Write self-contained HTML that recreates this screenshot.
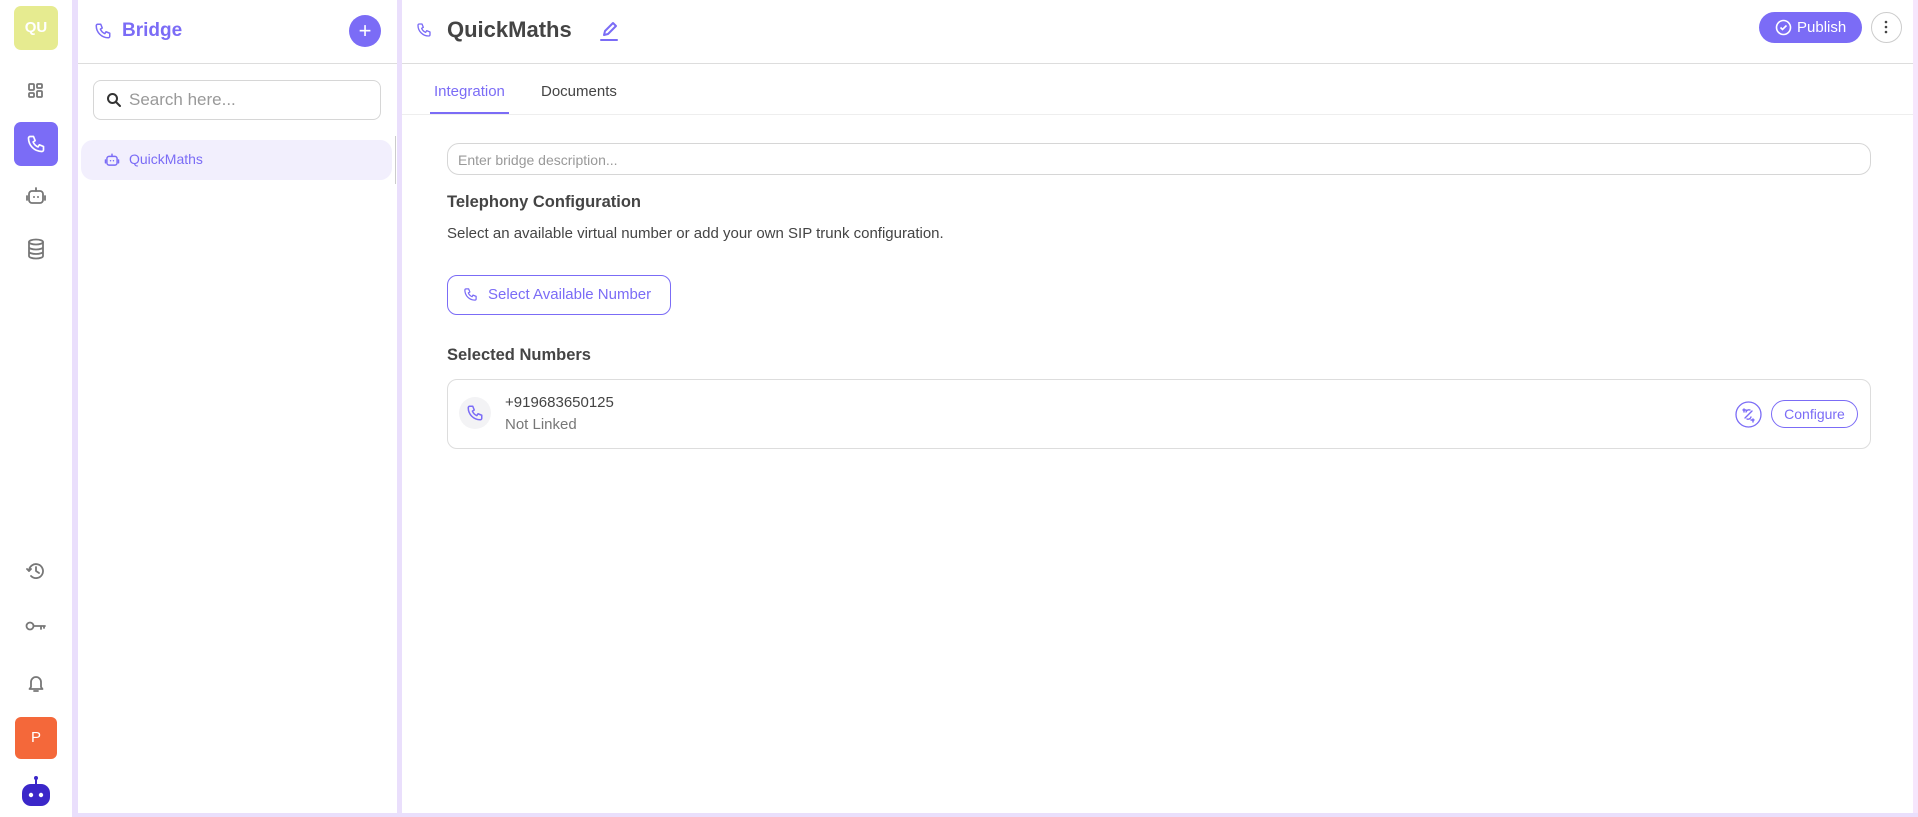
<!DOCTYPE html>
<html><head><meta charset="utf-8"><style>
*{box-sizing:border-box;margin:0;padding:0}
body{width:1918px;height:817px;overflow:hidden;background:#fff;font-family:"Liberation Sans",sans-serif;position:relative;color:#333}
.abs{position:absolute}
.ic{stroke:#7b6cf6;fill:none;stroke-width:2;stroke-linecap:round;stroke-linejoin:round}
.gr{stroke:#777;fill:none;stroke-width:1.8;stroke-linecap:round;stroke-linejoin:round}
</style></head><body>
<!-- rail -->
<div class="abs" style="left:14px;top:6px;width:44px;height:44px;border-radius:7px;background:#e6eb90;color:#fff;font-weight:bold;font-size:15px;text-align:center;line-height:44px">QU</div>
<svg class="abs" style="left:27px;top:82px" width="18" height="18" viewBox="0 0 18 18"><g class="gr" stroke-width="1.5"><rect x="2" y="2" width="5" height="6" rx="1"/><rect x="10" y="2" width="5" height="4" rx="1"/><rect x="2" y="11" width="5" height="4" rx="1"/><rect x="10" y="9" width="5" height="6" rx="1"/></g></svg>
<div class="abs" style="left:14px;top:122px;width:44px;height:44px;border-radius:7px;background:#7b6cf6"></div>
<svg class="abs" style="left:26px;top:134px" width="20" height="20" viewBox="0 0 24 24"><path d="M5 3h4l2 5-2.5 1.5a11 11 0 0 0 6 6L16 13l5 2v4a2 2 0 0 1-2 2A16 16 0 0 1 3 5a2 2 0 0 1 2-2" fill="none" stroke="#fff" stroke-width="2" stroke-linejoin="round"/></svg>
<svg class="abs" style="left:25px;top:185px" width="22" height="22" viewBox="0 0 22 22"><g class="gr"><rect x="4" y="6" width="14" height="12" rx="3"/><path d="M11 6V3M2 11v4M20 11v4"/></g><circle cx="9" cy="12" r="1" fill="#777"/><circle cx="13" cy="12" r="1" fill="#777"/></svg>
<svg class="abs" style="left:26px;top:238px" width="20" height="22" viewBox="0 0 20 22"><g class="gr"><ellipse cx="10" cy="4" rx="7" ry="2.5"/><path d="M3 4v14c0 1.4 3 2.5 7 2.5s7-1.1 7-2.5V4M3 9c0 1.4 3 2.5 7 2.5s7-1.1 7-2.5M3 13.5c0 1.4 3 2.5 7 2.5s7-1.1 7-2.5"/></g></svg>
<svg class="abs" style="left:26px;top:561px" width="20" height="20" viewBox="0 0 20 20"><g class="gr"><path d="M3 10a7 7 0 1 1 2 5"/><path d="M1 8l2 2 2-2M10 6v4l3 2"/></g></svg>
<svg class="abs" style="left:25px;top:619px" width="22" height="14" viewBox="0 0 22 14"><g class="gr" stroke-width="2"><circle cx="5" cy="7" r="3.5"/><path d="M8.5 7H20M16 7v3M19 7v2"/></g></svg>
<svg class="abs" style="left:27px;top:673px" width="18" height="20" viewBox="0 0 18 20"><g class="gr"><path d="M4 14V9a5 5 0 0 1 10 0v5l1.5 2h-13zM7 18h4"/></g></svg>
<div class="abs" style="left:15px;top:717px;width:42px;height:42px;border-radius:6px;background:#f4683a;color:#fff;font-size:15px;text-align:center;line-height:42px">P</div>
<svg class="abs" style="left:20px;top:775px" width="32" height="34" viewBox="0 0 32 34"><circle cx="16" cy="3" r="2" fill="#3b27c9"/><rect x="15" y="3" width="2" height="6" fill="#3b27c9"/><rect x="2" y="9" width="28" height="22" rx="9" fill="#3b27c9"/><circle cx="11" cy="20" r="2.2" fill="#fff"/><circle cx="21" cy="20" r="2.2" fill="#fff"/></svg>
<!-- lavender frames -->
<div class="abs" style="left:72px;top:0;width:6px;height:817px;background:#eadffc"></div>
<div class="abs" style="left:397px;top:0;width:5px;height:817px;background:#eadffc"></div>
<div class="abs" style="left:1913px;top:0;width:5px;height:817px;background:#f6e6fc"></div>
<div class="abs" style="left:72px;top:813px;width:1846px;height:4px;background:#eadffc"></div>
<!-- second panel -->
<svg class="abs" style="left:94px;top:22px" width="18" height="18" viewBox="0 0 24 24"><path class="ic" d="M5 3h4l2 5-2.5 1.5a11 11 0 0 0 6 6L16 13l5 2v4a2 2 0 0 1-2 2A16 16 0 0 1 3 5a2 2 0 0 1 2-2"/></svg>
<div class="abs" style="left:122px;top:20px;font-size:19px;font-weight:bold;color:#7b6cf6">Bridge</div>
<div class="abs" style="left:349px;top:15px;width:32px;height:32px;border-radius:50%;background:#7b6cf6;color:#fff;text-align:center;line-height:31px;font-size:22px">+</div>
<div class="abs" style="left:78px;top:63px;width:319px;height:1px;background:#ddd"></div>
<div class="abs" style="left:93px;top:80px;width:288px;height:40px;border:1px solid #d6d6d6;border-radius:8px"></div>
<svg class="abs" style="left:106px;top:92px" width="16" height="16" viewBox="0 0 16 16"><circle cx="6.5" cy="6.5" r="4.5" fill="none" stroke="#333" stroke-width="2"/><path d="M10 10l4 4" stroke="#333" stroke-width="2" stroke-linecap="round"/></svg>
<div class="abs" style="left:129px;top:90px;font-size:17px;color:#999">Search here...</div>
<div class="abs" style="left:81px;top:140px;width:311px;height:40px;border-radius:12px;background:#f2effd"></div>
<div class="abs" style="left:395px;top:136px;width:1px;height:48px;background:#ccc"></div>
<svg class="abs" style="left:104px;top:152px" width="16" height="16" viewBox="0 0 22 22"><g class="ic"><rect x="4" y="6" width="14" height="12" rx="3"/><path d="M11 6V3M2 11v4M20 11v4"/></g><circle cx="9" cy="12" r="1" fill="#7b6cf6"/><circle cx="13" cy="12" r="1" fill="#7b6cf6"/></svg>
<div class="abs" style="left:129px;top:151px;font-size:14px;color:#7b6cf6">QuickMaths</div>
<!-- main -->
<svg class="abs" style="left:416px;top:22px" width="16" height="16" viewBox="0 0 24 24"><path class="ic" d="M5 3h4l2 5-2.5 1.5a11 11 0 0 0 6 6L16 13l5 2v4a2 2 0 0 1-2 2A16 16 0 0 1 3 5a2 2 0 0 1 2-2"/></svg>
<div class="abs" style="left:447px;top:17px;font-size:22px;font-weight:bold;color:#444">QuickMaths</div>
<svg class="abs" style="left:600px;top:20px" width="18" height="22" viewBox="0 0 18 22"><path class="ic" stroke-width="1.6" d="M4 15l1-4 8-8 3 3-8 8zM1 20h16"/></svg>
<div class="abs" style="left:402px;top:63px;width:1511px;height:1px;background:#ddd"></div>
<div class="abs" style="left:1759px;top:12px;width:103px;height:31px;border-radius:16px;background:#7b6cf6;color:#fff;font-size:15px;line-height:31px;padding-left:38px">Publish</div>
<svg class="abs" style="left:1775px;top:19px" width="17" height="17" viewBox="0 0 17 17"><circle cx="8.5" cy="8.5" r="7" fill="none" stroke="#fff" stroke-width="1.6"/><path d="M5.5 8.5l2 2 4-4" fill="none" stroke="#fff" stroke-width="1.6"/></svg>
<div class="abs" style="left:1871px;top:12px;width:31px;height:31px;border-radius:50%;border:1px solid #ccc"></div>
<svg class="abs" style="left:1884px;top:20px" width="4" height="14"><circle cx="2" cy="2" r="1.3" fill="#444"/><circle cx="2" cy="7" r="1.3" fill="#444"/><circle cx="2" cy="12" r="1.3" fill="#444"/></svg>
<div class="abs" style="left:434px;top:83px;font-size:15px;color:#7b6cf6">Integration</div>
<div class="abs" style="left:541px;top:83px;font-size:15px;color:#444">Documents</div>
<div class="abs" style="left:402px;top:114px;width:1511px;height:1px;background:#eee"></div>
<div class="abs" style="left:430px;top:112px;width:79px;height:2px;background:#7b6cf6"></div>
<div class="abs" style="left:447px;top:143px;width:1424px;height:32px;border:1px solid #d6d6d6;border-radius:12px;font-size:14px;color:#999;padding:8px 0 0 10px">Enter bridge description...</div>
<div class="abs" style="left:447px;top:193px;font-size:16.5px;font-weight:bold;color:#444">Telephony Configuration</div>
<div class="abs" style="left:447px;top:225px;font-size:15px;color:#444">Select an available virtual number or add your own SIP trunk configuration.</div>
<div class="abs" style="left:447px;top:275px;width:224px;height:40px;border:1px solid #7b6cf6;border-radius:10px"></div>
<svg class="abs" style="left:463px;top:287px" width="15" height="15" viewBox="0 0 24 24"><path class="ic" d="M5 3h4l2 5-2.5 1.5a11 11 0 0 0 6 6L16 13l5 2v4a2 2 0 0 1-2 2A16 16 0 0 1 3 5a2 2 0 0 1 2-2"/></svg>
<div class="abs" style="left:488px;top:286px;font-size:15px;color:#7b6cf6">Select Available Number</div>
<div class="abs" style="left:447px;top:346px;font-size:16.5px;font-weight:bold;color:#444">Selected Numbers</div>
<div class="abs" style="left:447px;top:379px;width:1424px;height:70px;border:1px solid #ddd;border-radius:10px"></div>
<div class="abs" style="left:459px;top:397px;width:32px;height:32px;border-radius:50%;background:#f3f3f5"></div>
<svg class="abs" style="left:466px;top:404px" width="18" height="18" viewBox="0 0 24 24"><path class="ic" d="M5 3h4l2 5-2.5 1.5a11 11 0 0 0 6 6L16 13l5 2v4a2 2 0 0 1-2 2A16 16 0 0 1 3 5a2 2 0 0 1 2-2"/></svg>
<div class="abs" style="left:505px;top:394px;font-size:15px;color:#444">+919683650125</div>
<div class="abs" style="left:505px;top:416px;font-size:15px;color:#777">Not Linked</div>
<svg class="abs" style="left:1735px;top:401px" width="27" height="27" viewBox="0 0 27 27"><circle cx="13.5" cy="13.5" r="12.5" fill="none" stroke="#7b6cf6" stroke-width="1.3"/><path d="M10 17l7-7M11 11a3 3 0 0 1 4-2M16 16a3 3 0 0 1-4 2M8 9h3M9 8v3M16 19h3M18 18v3" fill="none" stroke="#7b6cf6" stroke-width="1.4" stroke-linecap="round"/></svg>
<div class="abs" style="left:1771px;top:400px;width:87px;height:28px;border:1px solid #7b6cf6;border-radius:14px;color:#7b6cf6;font-size:14px;text-align:center;line-height:26px">Configure</div>
</body></html>
